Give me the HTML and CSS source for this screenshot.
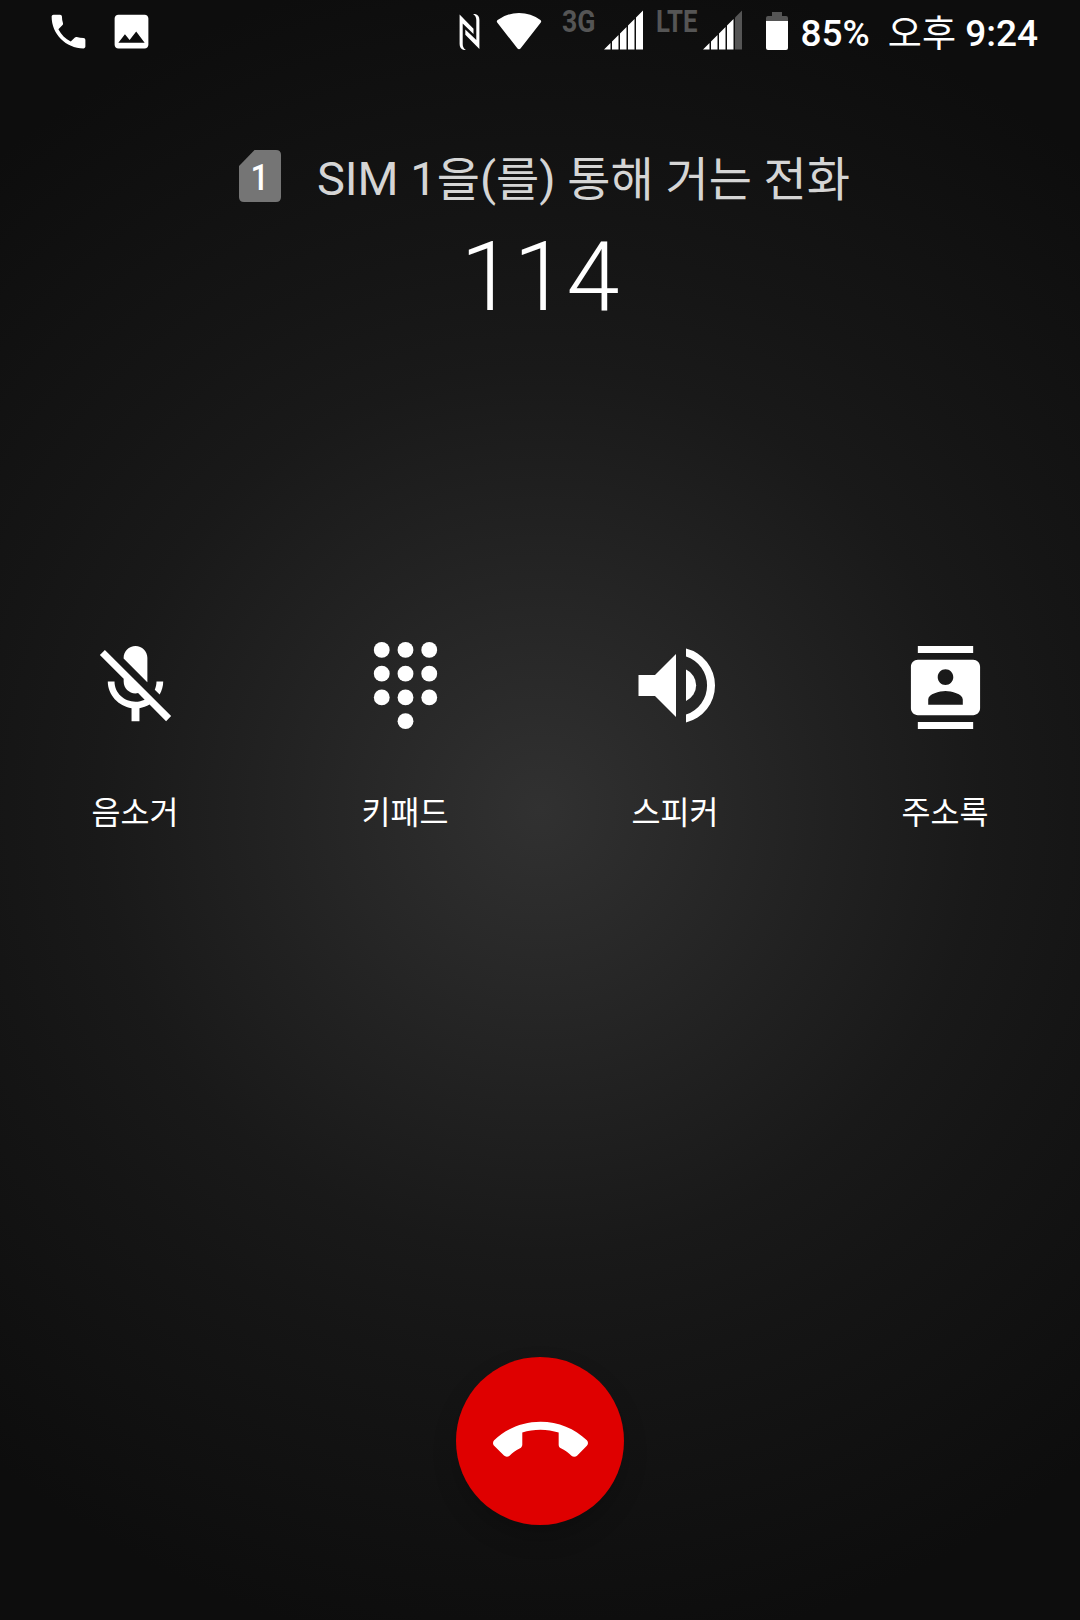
FILE: index.html
```
<!DOCTYPE html>
<html lang="ko">

<head>
    <meta charset="UTF-8">
    <meta name="viewport" content="width=device-width, initial-scale=1.0">
    <title>전화</title>
    <link rel="stylesheet" href="styles.css">
</head>

<body>
    <main class="call">
        <header class="status-bar">
            <div class="notifications">
                <svg class="icon-noti" viewBox="0 0 24 24">
                    <path d="M6.620 10.790c1.440 2.830 3.760 5.140 6.590 6.590l2.200-2.200c.27-.27.67-.36 1.020-.24 1.120.37 2.330.57 3.570.57.55 0 1 .45 1 1V20c0 .55-.45 1-1 1-9.390 0-17-7.610-17-17 0-.55.45-1 1-1h3.500c.55 0 1 .45 1 1 0 1.250.2 2.450.57 3.570.11.35.03.74-.25 1.020l-2.200 2.200z" />
                </svg>
                <svg class="icon-noti" viewBox="0 0 24 24">
                    <path d="M21 19V5c0-1.100-.9-2-2-2H5c-1.100 0-2 .9-2 2v14c0 1.100.9 2 2 2h14c1.100 0 2-.9 2-2zM8.500 13.500l2.500 3.010L14.500 12l4.500 6H5l3.500-4.500z" />
                </svg>
            </div>
            <div class="system">
                <svg class="nfc" viewBox="0 0 22 38">
                    <path d="M.6 1.500L14.500 15.800v5.200L3.700 10.500V31q0 4 3.200 6H5Q.6 36 .6 31z" />
                    <path d="M20.400 36L6.300 21.800v-5.300L17.300 27V7q0-4-3.200-6h2q4.300 1 4.300 6z" />
                </svg>
                <svg class="wifi" viewBox="0 0 46 38">
                    <path d="M1.200 10.500Q.200 9 1.600 8 11 1 23 1t21.400 7q1.400 1 .4 2.500L24.500 36.500q-1.500 1.300-3 0z" />
                </svg>
                <svg class="net net-3g" viewBox="0 0 34 40">
                    <text x="0" y="30" textLength="33.500" lengthAdjust="spacingAndGlyphs">3G</text>
                </svg>
                <svg class="signal" viewBox="0 0 40 40">
                    <path d="M0 39.500L6.500 33v6.500zM8 31.500L14.500 25v14.500H8zM16 23.500L22.500 17v22.500H16zM24 15.500L30.500 9v30.500H24zM32 7.500L39 .500v39h-7z" />
                </svg>
                <svg class="net net-lte" viewBox="0 0 42 40">
                    <text x="0" y="30" textLength="41.500" lengthAdjust="spacingAndGlyphs">LTE</text>
                </svg>
                <svg class="signal" viewBox="0 0 40 40">
                    <path d="M0 39.500L6.500 33v6.500zM8 31.500L14.500 25v14.500H8zM16 23.500L22.500 17v22.500H16zM24 15.500L30.500 9v30.500H24z" />
                    <path class="dim" d="M32 7.500L39 .500v39h-7z" />
                </svg>
                <svg class="battery" viewBox="0 0 22 38">
                    <path class="dim" d="M6 0h10v4h4q2 0 2 2v3H0V6q0-2 2-2h4z" />
                    <path d="M0 9h22v27q0 2-2 2H2q-2 0-2-2z" />
                </svg>
                <span class="percent">85%</span>
                <span class="clock"><span class="ampm">오후</span> 9:24</span>
            </div>
        </header>

        <section class="caller">
            <div class="via">
                <svg class="sim" viewBox="0 0 42 52">
                    <path d="M15.500 0H37q5 0 5 5v42q0 5-5 5H5q-5 0-5-5V16z" />
                    <text x="11.500" y="40" textLength="18.500" lengthAdjust="spacingAndGlyphs">1</text>
                </svg>
                <span class="via-text">SIM 1<span class="ko">을</span>(<span class="ko">를</span>) <span class="ko">통해 거는 전화</span></span>
            </div>
            <div class="number">114</div>
        </section>

        <section class="actions">
            <div class="action">
                <svg class="icon" viewBox="0 0 24 24">
                    <path d="M19 11h-1.700c0 .74-.16 1.430-.43 2.050l1.230 1.230c.56-.98.9-2.090.9-3.280zm-4.020.17c0-.06.02-.11.02-.17V5c0-1.660-1.340-3-3-3S9 3.340 9 5v.18l5.980 5.990zM4.270 3L3 4.270l6.010 6.010V11c0 1.660 1.330 3 2.990 3 .22 0 .44-.03.65-.08l1.660 1.660c-.71.33-1.500.52-2.310.52-2.760 0-5.300-2.100-5.300-5.100H5c0 3.410 2.720 6.230 6 6.720V21h2v-3.280c.91-.13 1.770-.45 2.540-.9L19.730 21 21 19.730 4.270 3z" />
                </svg>
                <span class="label">음소거</span>
            </div>
            <div class="action">
                <svg class="icon" viewBox="0 0 24 24">
                    <circle cx="6" cy="3" r="2" />
                    <circle cx="12" cy="3" r="2" />
                    <circle cx="18" cy="3" r="2" />
                    <circle cx="6" cy="9" r="2" />
                    <circle cx="12" cy="9" r="2" />
                    <circle cx="18" cy="9" r="2" />
                    <circle cx="6" cy="15" r="2" />
                    <circle cx="12" cy="15" r="2" />
                    <circle cx="18" cy="15" r="2" />
                    <circle cx="12" cy="21" r="2" />
                </svg>
                <span class="label">키패드</span>
            </div>
            <div class="action">
                <svg class="icon" viewBox="0 0 95 95">
                    <path d="M10.500 37h16.500l21-21v63l-21-21H10.500z" />
                    <path d="M58 31.500a17.300 17.300 0 0 1 0 31.500z" />
                    <path d="M58 10.500a38.100 38.100 0 0 1 0 74v-8a30.500 30.500 0 0 0 0-58z" />
                </svg>
                <span class="label">스피커</span>
            </div>
            <div class="action">
                <svg class="icon icon-contacts" viewBox="0 0 24 24">
                    <path d="M20 0H4v2h16V0zM4 24h16v-2H4v2zM20 4H4c-1.100 0-2 .9-2 2v12c0 1.100.9 2 2 2h16c1.100 0 2-.9 2-2V6c0-1.100-.9-2-2-2zm-8 2.750c1.240 0 2.250 1.010 2.250 2.250s-1.010 2.250-2.250 2.250S9.750 10.240 9.750 9 10.760 6.750 12 6.750zM17 17H7v-1.500c0-1.670 3.330-2.500 5-2.500s5 .83 5 2.500V17z" />
                </svg>
                <span class="label">주소록</span>
            </div>
        </section>

        <button type="button" class="btn-end" aria-label="통화 종료">
            <svg class="icon" viewBox="0 0 24 24">
                <path d="M12 9c-1.600 0-3.150.25-4.600.72v3.100c0 .39-.23.74-.56.9-.98.49-1.870 1.120-2.660 1.850-.18.18-.43.28-.7.28-.28 0-.53-.11-.71-.29L.29 13.080c-.18-.17-.29-.42-.29-.7 0-.28.11-.53.29-.71C3.340 8.780 7.460 7 12 7s8.660 1.780 11.710 4.670c.18.18.29.43.29.71 0 .28-.11.53-.29.71l-2.480 2.480c-.18.18-.43.29-.71.29-.27 0-.52-.11-.7-.28-.79-.74-1.690-1.360-2.670-1.850-.33-.16-.56-.5-.56-.9v-3.100C15.150 9.250 13.600 9 12 9z" />
            </svg>
        </button>
    </main>
</body>

</html>
```

FILE: styles.css
```
* {
    box-sizing: border-box;
}

body {
    margin: 0;
    background-color: #0d0d0d;
    color: #fff;
    font-family: Roboto, 'Noto Sans CJK KR', sans-serif;
}

svg {
    display: block;
    flex-shrink: 0;
    fill: #fff;
}

.call {
    width: 1080px;
    height: 1620px;
    overflow: hidden;
    display: flex;
    flex-direction: column;
    align-items: center;
    background: radial-gradient(circle 850px at 540px 810px, #313131 0%, #212121 34%, #191919 52%, #151515 66%, #0d0d0d 100%);
}

/* status bar */
.status-bar {
    width: 100%;
    height: 64px;
    padding: 0 42px 0 46px;
    display: flex;
    justify-content: space-between;
}

.notifications {
    display: flex;
    gap: 18px;
    padding-top: 9px;
}

.icon-noti {
    width: 45px;
    height: 45px;
}

.system {
    display: flex;
    height: 64px;
}

.nfc {
    width: 22px;
    height: 38px;
    margin: 13px 15px 0 0;
}

.wifi {
    width: 46px;
    height: 38px;
    margin: 12px 20px 0 0;
}

.net {
    height: 40px;
    margin-top: 2px;
    overflow: visible;
    font-size: 31px;
    font-weight: 700;
    fill: #555;
}

.net-3g {
    width: 34px;
    margin-right: 8px;
}

.net-lte {
    width: 42px;
    margin-right: 5px;
}

.signal {
    width: 40px;
    height: 40px;
    margin: 10px 12px 0 0;
}

.signal ~ .signal {
    margin-right: 23px;
}

.dim {
    fill: #555;
}

.battery {
    width: 22px;
    height: 38px;
    margin: 12px 13px 0 0;
}

.percent,
.clock {
    font-size: 37px;
    font-weight: 500;
    line-height: 68px;
    white-space: nowrap;
}

.percent {
    margin-right: 18px;
}

.ampm {
    font-weight: 400;
    line-height: 1;
    vertical-align: -1px;
}

/* caller info */
.caller {
    height: 574px;
    padding-top: 80px;
    display: flex;
    flex-direction: column;
    align-items: center;
}

.via {
    height: 64px;
    padding-left: 9px;
    display: flex;
    align-items: center;
    gap: 36px;
}

.sim {
    width: 42px;
    height: 52px;
    fill: #757575;
}

.sim text {
    fill: #fff;
    font-size: 37px;
    font-weight: 500;
}

.via-text {
    padding-top: 5px;
    color: #d5d5d5;
    font-size: 47px;
    line-height: 64px;
    white-space: nowrap;
}

.ko {
    line-height: 1;
    vertical-align: -1px;
}

.number {
    font-size: 95.5px;
    font-weight: 300;
    line-height: 112px;
    margin-top: 13px;
}

/* in-call buttons */
.actions {
    width: 100%;
    display: grid;
    grid-template-columns: repeat(4, 1fr);
}

.action {
    display: flex;
    flex-direction: column;
    align-items: center;
}

.icon {
    width: 95px;
    height: 95px;
}

.icon-contacts {
    width: 83px;
    height: 83px;
    margin: 8px 0 4px;
}

.label {
    margin-top: 57px;
    font-size: 31.5px;
    line-height: 48px;
}

.btn-end {
    width: 168px;
    height: 168px;
    margin-top: 519px;
    padding: 0;
    display: flex;
    align-items: center;
    justify-content: center;
    border: none;
    border-radius: 50%;
    background-color: #df0000;
    box-shadow: 0 12px 24px rgba(0, 0, 0, .2);
}
```
